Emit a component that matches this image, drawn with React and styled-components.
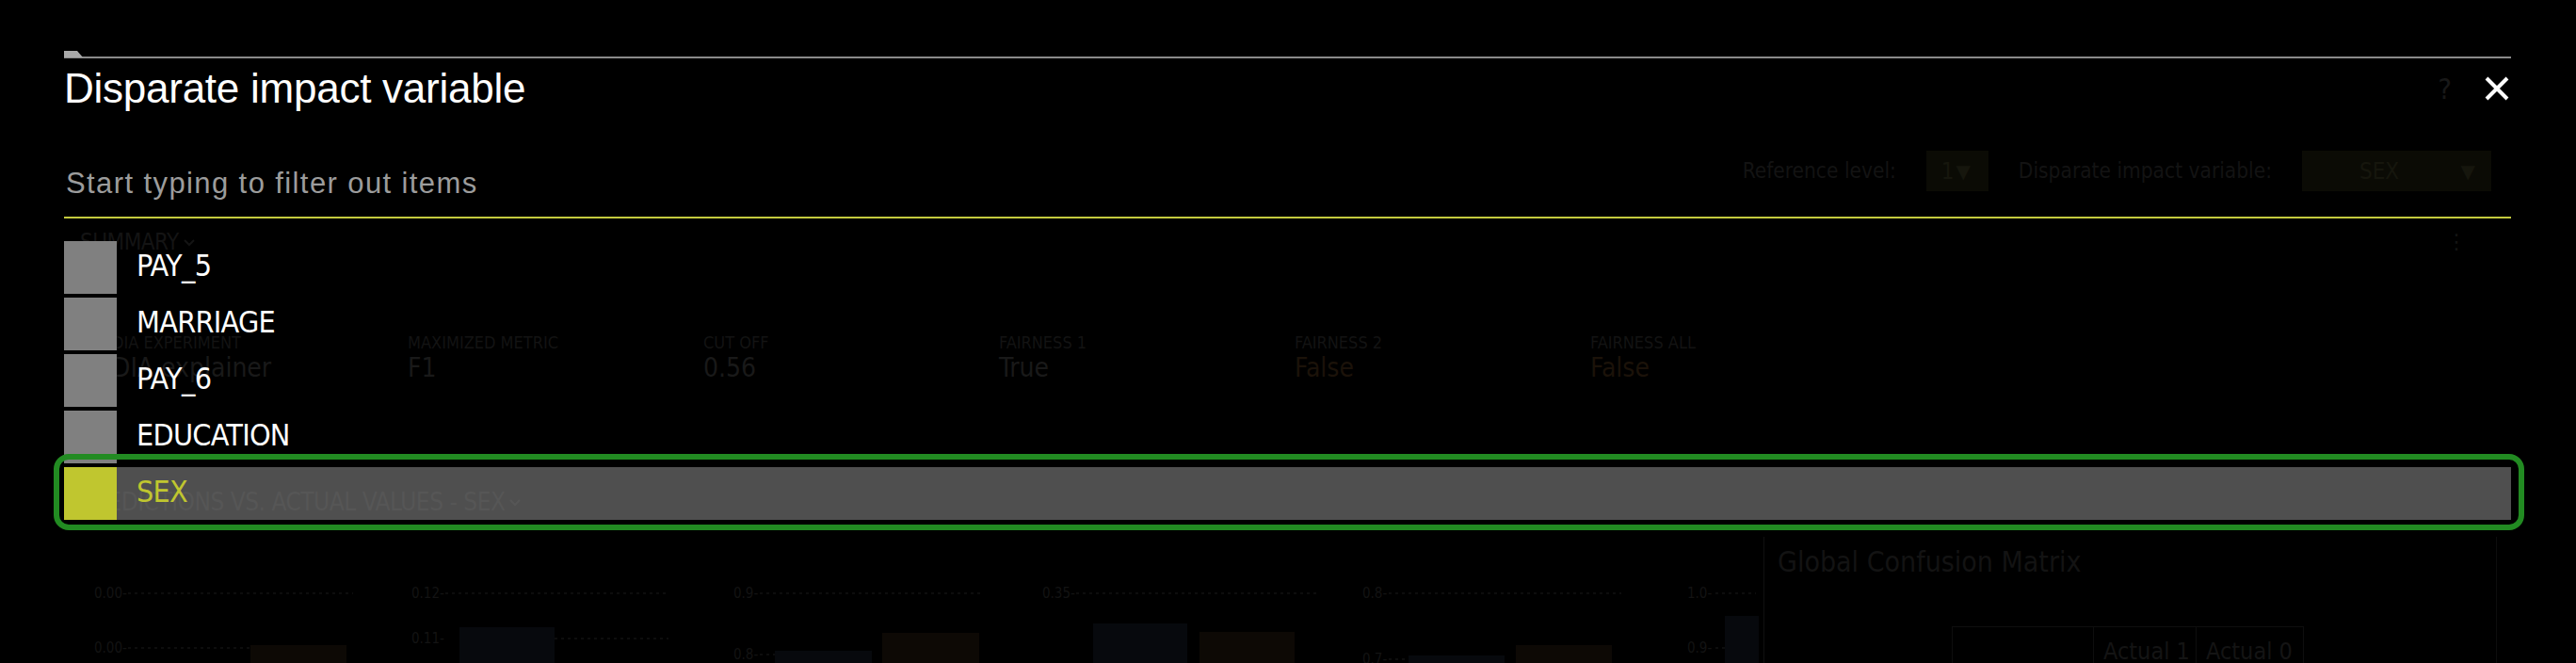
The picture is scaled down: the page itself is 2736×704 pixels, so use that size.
import React from "react";
import styled, { createGlobalStyle } from "styled-components";

// fonts: narrow sans for labels, regular for the modal title
const NARROW = `"Liberation Sans Narrow", "DejaVu Sans Condensed", "Liberation Sans", sans-serif`;
const REGULAR = `"Liberation Sans", Arial, sans-serif`;

const GlobalStyle = createGlobalStyle`
  html, body {
    margin: 0;
    padding: 0;
    background: #000;
  }
  body {
    width: 2736px;
    height: 704px;
    overflow: hidden;
    font-family: ${NARROW};
  }
  * {
    box-sizing: border-box;
  }
`;

const Page = styled.div`
  position: relative;
  width: 2736px;
  height: 704px;
  overflow: hidden;
  background: #000;
`;

/* ---------- dimmed dashboard behind the modal ---------- */

const Dashboard = styled.div`
  padding: 160px 90px 0 0;
  color: #151515;
  white-space: nowrap;
`;

const Toolbar = styled.div`
  display: flex;
  justify-content: flex-end;
  align-items: center;
  height: 43px;
`;

const ToolLabel = styled.span`
  font-size: 22.5px;
  line-height: 25px;
  color: #131313;
  margin-right: 32px;
`;

const SelectBox = styled.div`
  display: flex;
  align-items: center;
  justify-content: space-between;
  width: ${(p) => p.$w}px;
  height: 43px;
  padding: 0 ${(p) => p.$pr}px 0 ${(p) => p.$pl}px;
  margin-right: ${(p) => p.$mr || 0}px;
  background: #0b0b05;
  color: #16160d;
  font-size: 24px;
`;

const Caret = styled.span`
  font-family: "DejaVu Sans", sans-serif;
  font-size: 20px;
  color: #16160d;
`;

const SectionRow = styled.div`
  display: flex;
  align-items: center;
  justify-content: space-between;
  margin-top: ${(p) => p.$mt}px;
  padding-left: 85px;
`;

const SectionTitle = styled.span`
  display: flex;
  align-items: center;
  gap: 4px;
  font-size: ${(p) => p.$size}px;
  line-height: ${(p) => p.$size}px;
  letter-spacing: -0.5px;
  color: #141414;
`;

const Dots = styled.span`
  font-family: "DejaVu Sans", sans-serif;
  font-size: 22px;
  line-height: 24px;
  color: #141414;
  margin-right: 26px;
`;

const Metrics = styled.div`
  display: grid;
  grid-template-columns: repeat(6, 314px);
  margin-top: 86px;
  padding-left: 119px;
`;

const Metric = styled.div`
  display: flex;
  flex-direction: column;
  gap: 4px;
`;

const MetricLabel = styled.span`
  font-size: 18px;
  line-height: 18px;
  color: #131313;
`;

const MetricValue = styled.span`
  font-size: 28px;
  line-height: 28px;
  color: ${(p) => (p.$warn ? "#1b1209" : "#191919")};
`;

const Bottom = styled.div`
  display: flex;
  margin-top: 24px;
  height: 140px;
`;

const ChartsRow = styled.div`
  flex: none;
  display: flex;
  width: 1873px;
  padding-left: 100px;
`;

const ChartSvg = styled.svg`
  flex: none;
  width: ${(p) => p.$w}px;
  height: 140px;
  font-family: ${NARROW};
`;

const MatrixPanel = styled.div`
  flex: none;
  width: 779px;
  border-left: 1px solid #101010;
  border-right: 1px solid #0d0d0d;
  padding: 11px 0 0 14px;
`;

const MatrixTitle = styled.div`
  font-size: 30px;
  line-height: 32px;
  color: #131313;
`;

const MatrixTable = styled.div`
  display: grid;
  grid-template-columns: 149px 109px 114px;
  width: 374px;
  margin: 52px 0 0 185px;
  border: 1px solid #0e0e0e;
  height: 60px;
`;

const MatrixHead = styled.div`
  border-left: 1px solid #0e0e0e;
  padding: 12px 0 0 10px;
  font-size: 25px;
  line-height: 28px;
  color: #141414;
`;

/* ---------- modal ---------- */

const Overlay = styled.div`
  position: absolute;
  inset: 0;
`;

const Modal = styled.div`
  position: relative;
  margin: 60px 69px 0 68px;
  border-top: 2px solid #8a8a8a;

  &::before {
    content: "";
    position: absolute;
    left: 0;
    top: -8px;
    width: 20px;
    height: 7px;
    background: #a9a9a9;
    clip-path: polygon(0 0, 70% 0, 100% 100%, 0 100%);
  }
`;

const Header = styled.div`
  display: flex;
  justify-content: space-between;
  align-items: center;
  padding-top: 10px;
  height: 54px;
`;

const Title = styled.h2`
  margin: 0;
  font-family: ${REGULAR};
  font-weight: 400;
  font-size: 44px;
  line-height: 44px;
  letter-spacing: -0.25px;
  color: #fff;
`;

const HeaderActions = styled.div`
  display: flex;
  align-items: center;
  gap: 35px;
  margin-right: 2px;
`;

const Help = styled.span`
  font-size: 31px;
  line-height: 31px;
  color: #181818;
`;

const CloseButton = styled.button`
  display: flex;
  padding: 0;
  border: 0;
  background: transparent;
  cursor: pointer;
`;

const FilterInput = styled.input`
  display: block;
  width: 100%;
  height: 53px;
  margin-top: 63px;
  padding: 0 0 20px 2px;
  border: 0;
  border-bottom: 2px solid #c4ca3e;
  background: transparent;
  font-family: ${REGULAR};
  font-size: 31px;
  line-height: 31px;
  letter-spacing: 1.4px;
  color: #ddd;
  outline: none;

  &::placeholder {
    color: #9c9c9c;
  }
`;

const List = styled.ul`
  list-style: none;
  margin: 24px 0 0;
  padding: 0;
  display: flex;
  flex-direction: column;
  gap: 4px;
`;

const Item = styled.li`
  position: relative;
  display: flex;
  align-items: center;
  height: 56px;
  background: ${(p) => (p.$selected ? "rgba(128, 128, 128, 0.62)" : "transparent")};
  cursor: pointer;

  ${(p) =>
    p.$selected &&
    `
    &::after {
      content: "";
      position: absolute;
      top: -14px;
      bottom: -11px;
      left: -11px;
      right: -14px;
      border: 6px solid #228b22;
      border-radius: 16px;
      pointer-events: none;
    }
  `}
`;

const Swatch = styled.span`
  flex: none;
  width: 56px;
  height: 56px;
  background: ${(p) => (p.$selected ? "#c0c62f" : "#808080")};
`;

const ItemLabel = styled.span`
  margin-left: 21px;
  padding-bottom: 4px;
  font-size: 32px;
  line-height: 32px;
  letter-spacing: -0.7px;
  color: ${(p) => (p.$selected ? "#c0c62f" : "#fff")};
`;

const Chevron = ({ size = 14, color = "#141414" }) => (
  <svg width={size} height={size} viewBox="0 0 14 14">
    <path d="M2 5 L7 10 L12 5" fill="none" stroke={color} strokeWidth="2" />
  </svg>
);

const BLUE = "#07090d";
const ORANGE = "#0d0905";

const charts = [
  {
    w: 337,
    ticks: [
      { t: "0.00-", y: 60, from: 36, to: 275 },
      { t: "0.00-", y: 118, from: 36, to: 166 },
    ],
    bars: [{ x: 166, w: 102, top: 115, c: ORANGE }],
  },
  {
    w: 342,
    ticks: [
      { t: "0.12-", y: 60, from: 36, to: 273 },
      { t: "0.11-", y: 108, from: 152, to: 273 },
    ],
    bars: [{ x: 51, w: 101, top: 96, c: BLUE }],
  },
  {
    w: 328,
    ticks: [
      { t: "0.9-", y: 60, from: 28, to: 266 },
      { t: "0.8-", y: 125, from: 28, to: 44 },
    ],
    bars: [
      { x: 44, w: 103, top: 121, c: BLUE },
      { x: 158, w: 103, top: 102, c: ORANGE },
    ],
  },
  {
    w: 340,
    ticks: [{ t: "0.35-", y: 60, from: 36, to: 293 }],
    bars: [
      { x: 54, w: 100, top: 92, c: BLUE },
      { x: 167, w: 101, top: 101, c: ORANGE },
    ],
  },
  {
    w: 345,
    ticks: [
      { t: "0.8-", y: 60, from: 28, to: 275 },
      { t: "0.7-", y: 130, from: 28, to: 49 },
    ],
    bars: [
      { x: 49, w: 102, top: 126, c: BLUE },
      { x: 163, w: 102, top: 115, c: ORANGE },
    ],
  },
  {
    w: 81,
    ticks: [
      { t: "1.0-", y: 60, from: 30, to: 73 },
      { t: "0.9-", y: 118, from: 30, to: 40 },
    ],
    bars: [{ x: 40, w: 36, top: 84, c: BLUE }],
  },
];

const metrics = [
  { label: "DIA EXPERIMENT", value: "DIA explainer" },
  { label: "MAXIMIZED METRIC", value: "F1" },
  { label: "CUT OFF", value: "0.56" },
  { label: "FAIRNESS 1", value: "True" },
  { label: "FAIRNESS 2", value: "False", warn: true },
  { label: "FAIRNESS ALL", value: "False", warn: true },
];

const items = ["PAY_5", "MARRIAGE", "PAY_6", "EDUCATION", "SEX"];

const Chart = ({ chart }) => (
  <ChartSvg $w={chart.w} viewBox={`0 0 ${chart.w} 140`}>
    {chart.ticks.map((tk, i) => (
      <g key={i}>
        <text x="0" y={tk.y + 5} fontSize="15" fill="#131313">
          {tk.t}
        </text>
        <line x1={tk.from} x2={tk.to} y1={tk.y} y2={tk.y} stroke="#121212" strokeWidth="1.5" strokeDasharray="3 4" />
      </g>
    ))}
    {chart.bars.map((b, i) => (
      <rect key={i} x={b.x} y={b.top} width={b.w} height={140 - b.top} fill={b.c} />
    ))}
  </ChartSvg>
);

export default function App() {
  const selected = "SEX";
  return (
    <Page>
      <GlobalStyle />
      <Dashboard>
        <Toolbar>
          <ToolLabel>Reference level:</ToolLabel>
          <SelectBox $w={66} $pl={16} $pr={19} $mr={32}>
            <span>1</span>
            <Caret>▼</Caret>
          </SelectBox>
          <ToolLabel>Disparate impact variable:</ToolLabel>
          <SelectBox $w={201} $pl={61} $pr={17}>
            <span>SEX</span>
            <Caret>▼</Caret>
          </SelectBox>
        </Toolbar>

        <SectionRow $mt={42}>
          <SectionTitle $size={24}>
            SUMMARY
            <Chevron />
          </SectionTitle>
          <Dots>⋮</Dots>
        </SectionRow>

        <Metrics>
          {metrics.map((m) => (
            <Metric key={m.label}>
              <MetricLabel>{m.label}</MetricLabel>
              <MetricValue $warn={m.warn}>{m.value}</MetricValue>
            </Metric>
          ))}
        </Metrics>

        <SectionRow $mt={115}>
          <SectionTitle $size={26}>
            PREDICTIONS VS. ACTUAL VALUES - SEX
            <Chevron />
          </SectionTitle>
        </SectionRow>

        <Bottom>
          <ChartsRow>
            {charts.map((c, i) => (
              <Chart key={i} chart={c} />
            ))}
          </ChartsRow>
          <MatrixPanel>
            <MatrixTitle>Global Confusion Matrix</MatrixTitle>
            <MatrixTable>
              <div />
              <MatrixHead>Actual 1</MatrixHead>
              <MatrixHead>Actual 0</MatrixHead>
            </MatrixTable>
          </MatrixPanel>
        </Bottom>
      </Dashboard>

      <Overlay>
        <Modal>
          <Header>
            <Title>Disparate impact variable</Title>
            <HeaderActions>
              <Help>?</Help>
              <CloseButton aria-label="Close">
                <svg width="26" height="26" viewBox="0 0 26 26">
                  <path d="M2 2 L24 24 M24 2 L2 24" stroke="#fff" strokeWidth="4" />
                </svg>
              </CloseButton>
            </HeaderActions>
          </Header>

          <FilterInput placeholder="Start typing to filter out items" />

          <List>
            {items.map((name) => (
              <Item key={name} $selected={name === selected}>
                <Swatch $selected={name === selected} />
                <ItemLabel $selected={name === selected}>{name}</ItemLabel>
              </Item>
            ))}
          </List>
        </Modal>
      </Overlay>
    </Page>
  );
}
